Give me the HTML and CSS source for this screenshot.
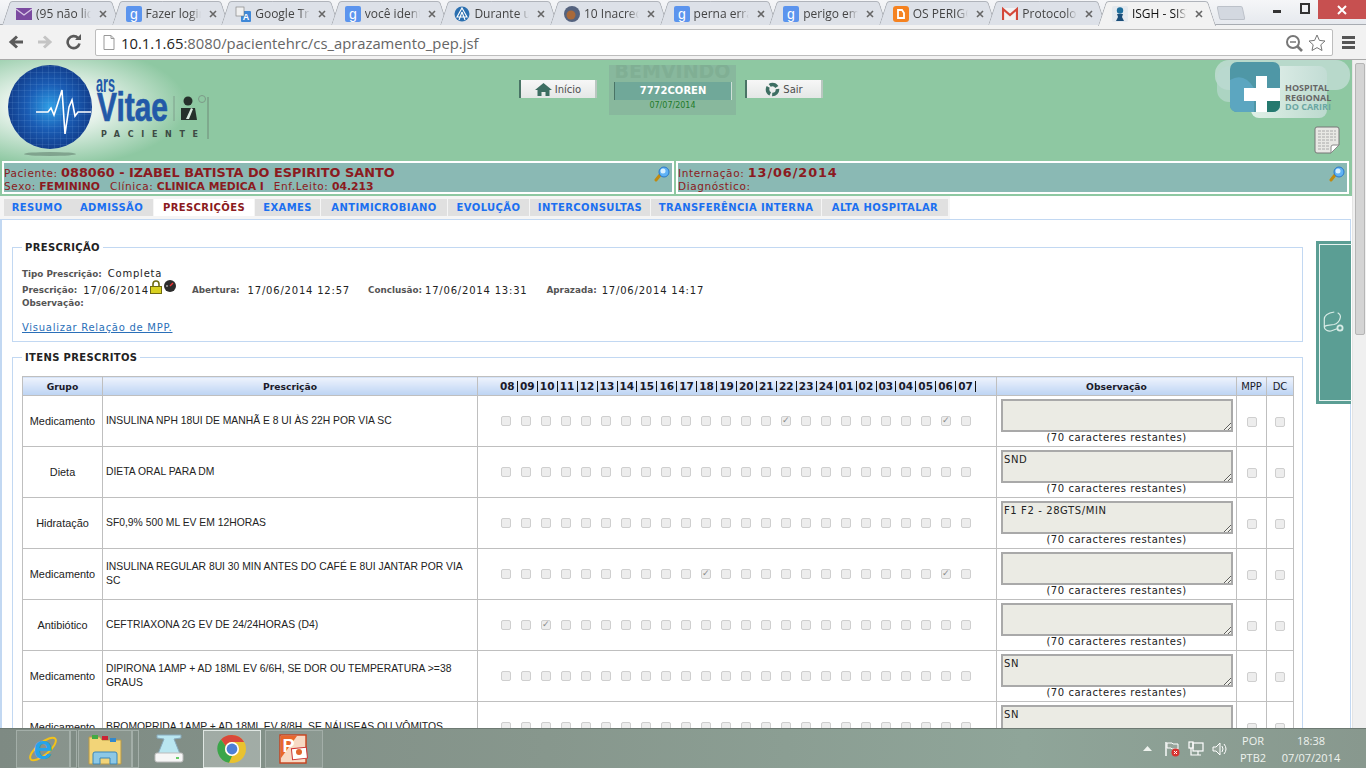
FILE: index.html
```html
<!DOCTYPE html>
<html lang="pt-BR">
<head>
<meta charset="utf-8">
<title>ISGH - SISTEMA</title>
<link rel="stylesheet" href="styles.css">
</head>
<body>
<svg class="defs" width="0" height="0">
  <symbol id="g" viewBox="0 0 16 16"><rect width="16" height="16" rx="2" fill="#5b94ee"/><text x="8" y="13" text-anchor="middle" font-family="Liberation Sans" font-size="14" fill="#fff">g</text></symbol>
  <symbol id="mag" viewBox="0 0 16 16"><path d="M2 14l4-5" stroke="#c08a10" stroke-width="3" stroke-linecap="round"/><circle cx="10" cy="6" r="5" fill="#5fb2f5" stroke="#2a78c8"/><circle cx="9" cy="5" r="2.5" fill="#d9f0ff"/></symbol>
  <symbol id="x" viewBox="0 0 8 8"><path d="M1 1l6 6M7 1L1 7" stroke="#666" stroke-width="1.6"/></symbol>
</svg>

<div class="tabstrip">
  <div class="tab"><svg class="fav" viewBox="0 0 16 16"><rect y="2" width="16" height="12" fill="#7b4aa0"/><path d="M0 3l8 6 8-6" fill="none" stroke="#d9c8e6" stroke-width="1.3"/></svg><span class="tab-t">(95 não lidas)</span><svg class="tab-x"><use href="#x"/></svg></div>
  <div class="tab"><svg class="fav"><use href="#g"/></svg><span class="tab-t">Fazer login</span><svg class="tab-x"><use href="#x"/></svg></div>
  <div class="tab"><svg class="fav" viewBox="0 0 16 16"><rect x="6" y="5" width="10" height="11" rx="1" fill="#3f88d8"/><text x="11" y="14" text-anchor="middle" font-family="Liberation Sans" font-weight="700" font-size="9" fill="#fff">A</text><rect x="1" y="1" width="8" height="9" fill="#f0f0f0" stroke="#777" stroke-width=".6"/></svg><span class="tab-t">Google Tradutor</span><svg class="tab-x"><use href="#x"/></svg></div>
  <div class="tab"><svg class="fav"><use href="#g"/></svg><span class="tab-t">você identifica</span><svg class="tab-x"><use href="#x"/></svg></div>
  <div class="tab"><svg class="fav" viewBox="0 0 16 16"><circle cx="8" cy="8" r="7.5" fill="#2a6fb0"/><path d="M8 2l5 9H3zM8 6l-3 8M8 6l3 8" fill="none" stroke="#fff" stroke-width="1.1"/></svg><span class="tab-t">Durante um</span><svg class="tab-x"><use href="#x"/></svg></div>
  <div class="tab"><svg class="fav" viewBox="0 0 16 16"><circle cx="8" cy="8" r="8" fill="#54627e"/><circle cx="7" cy="9" r="4.5" fill="#a8693a"/></svg><span class="tab-t">10 Inacreditáveis</span><svg class="tab-x"><use href="#x"/></svg></div>
  <div class="tab"><svg class="fav"><use href="#g"/></svg><span class="tab-t">perna errada</span><svg class="tab-x"><use href="#x"/></svg></div>
  <div class="tab"><svg class="fav"><use href="#g"/></svg><span class="tab-t">perigo em</span><svg class="tab-x"><use href="#x"/></svg></div>
  <div class="tab"><svg class="fav" viewBox="0 0 16 16"><rect width="16" height="16" rx="3" fill="#f58220"/><path d="M5 4h4l2 3v5H5z" fill="none" stroke="#fff" stroke-width="1.8"/></svg><span class="tab-t">OS PERIGOS</span><svg class="tab-x"><use href="#x"/></svg></div>
  <div class="tab"><svg class="fav" viewBox="0 0 16 16"><rect y="2" width="16" height="12" fill="#f2f2f2"/><path d="M1 14V3l7 6 7-6v11" fill="none" stroke="#d4493a" stroke-width="2.2"/></svg><span class="tab-t">Protocolo</span><svg class="tab-x"><use href="#x"/></svg></div>
  <div class="tab tab-on"><svg class="fav" viewBox="0 0 16 16"><rect width="16" height="16" rx="2" fill="#e4e9ee"/><circle cx="8" cy="4.5" r="3.2" fill="#1e6e9c"/><path d="M5 8h6l-1 3 2 4H4l2-4z" fill="#1a4d78"/></svg><span class="tab-t">ISGH - SISTEMA</span><svg class="tab-x"><use href="#x"/></svg></div>
  <div class="newtab"></div>
  <div class="winctl">
    <span class="w-min"></span>
    <span class="w-max"></span>
    <span class="w-close"><svg width="10" height="10" viewBox="0 0 10 10"><path d="M1 1l8 8M9 1L1 9" stroke="#fff" stroke-width="2"/></svg></span>
  </div>
</div>

<div class="toolbar">
  <svg class="tb-ic" viewBox="0 0 16 16"><path d="M15 8H4M9 2.5L3 8l6 5.5" fill="none" stroke="#5a5a5a" stroke-width="3"/></svg>
  <svg class="tb-ic" viewBox="0 0 16 16"><path d="M1 8h11M7 2.5L13 8l-6 5.5" fill="none" stroke="#c4c4c4" stroke-width="3"/></svg>
  <svg class="tb-ic" viewBox="0 0 16 16"><path d="M13.5 9.5A6 6 0 1 1 12 4" fill="none" stroke="#5a5a5a" stroke-width="2.6"/><path d="M9 6h6V0z" fill="#5a5a5a"/></svg>
  <div class="omnibox">
    <svg class="page-ic" viewBox="0 0 12 15"><path d="M1 .5h7l3 3v11H1z" fill="#fff" stroke="#999"/><path d="M8 .5v3h3" fill="none" stroke="#999"/></svg>
    <span class="url"><b>10.1.1.65</b>:8080/pacientehrc/cs_aprazamento_pep.jsf</span>
    <svg class="omni-ic" viewBox="0 0 18 18"><circle cx="8" cy="8" r="6" fill="none" stroke="#777" stroke-width="2"/><path d="M12 12l5 5" stroke="#777" stroke-width="2.6"/><path d="M5 8h6" stroke="#777" stroke-width="1.5"/></svg>
    <svg class="omni-ic" viewBox="0 0 18 18"><path d="M9 1l2.4 5.4 5.6.6-4.2 3.8 1.2 5.7L9 13.6l-5 2.9 1.2-5.7L1 7l5.6-.6z" fill="#fff" stroke="#777"/></svg>
  </div>
  <div class="menu-ic"><i></i><i></i><i></i></div>
</div>

<div class="viewport">
  <div class="page">
    <header class="head">
      <div class="head-top">
        <svg class="logo" width="220" height="101" viewBox="0 0 220 101">
          <defs>
            <radialGradient id="lg1" cx="50%" cy="50%" r="50%"><stop offset="0" stop-color="#2f9fe6"/><stop offset=".55" stop-color="#1a5cb4"/><stop offset="1" stop-color="#123f8e"/></radialGradient>
            <radialGradient id="lg2" cx="25%" cy="45%" r="60%"><stop offset="0" stop-color="#fff"/><stop offset=".35" stop-color="#e8f3ec"/><stop offset="1" stop-color="#8ec8a2"/></radialGradient>
            <pattern id="lg3" width="6" height="6" patternUnits="userSpaceOnUse"><path d="M6 0H0v6" fill="none" stroke="#8fc0ee" stroke-width=".5" opacity=".5"/></pattern>
          </defs>
          <rect width="220" height="101" fill="url(#lg2)"/>
          <ellipse cx="50" cy="94" rx="26" ry="2" fill="#6f8f7c" opacity=".7"/>
          <circle cx="50" cy="47" r="42" fill="url(#lg1)"/>
          <circle cx="50" cy="47" r="42" fill="url(#lg3)"/>
          <path d="M36 52H48L51 48 54 55 57 46 62 30 65 74 69 47 72 40 75 56 78 52H91" fill="none" stroke="#fff" stroke-width="1.6"/>
          <text x="96" y="32" font-family="Liberation Sans Narrow, Liberation Sans" font-weight="700" font-size="23" fill="#2359a8" textLength="19" lengthAdjust="spacingAndGlyphs">ars</text>
          <text x="97" y="61" font-family="Liberation Sans Narrow, Liberation Sans" font-weight="700" font-size="41" fill="#2359a8" stroke="#2359a8" stroke-width=".7" textLength="71" lengthAdjust="spacingAndGlyphs">Vitae</text>
          <text x="101" y="77" font-family="DejaVu Sans" font-weight="700" font-size="8" fill="#3d4a44" textLength="97">PACIENTE</text>
          <path d="M174 36v25" stroke="#7fa08c"/>
          <circle cx="188" cy="41" r="4.5" fill="#26302b"/>
          <path d="M181 48h14l2 12h-16z" fill="#26302b"/>
          <path d="M186 59l5-11 2 1-4 10z" fill="#dcebe1"/>
          <circle cx="202" cy="39" r="3.5" fill="none" stroke="#7d9a88"/>
          <path d="M208 37v42" stroke="#6f8a78"/>
        </svg>
        <nav class="topnav">
          <a class="navbtn"><svg width="17" height="13" viewBox="0 0 17 13"><path d="M8.5 0L0 7h2.5v6h4V9h4v4h4V7H17z" fill="#3d6e62"/></svg>Início</a>
          <div class="welcome">
            <div class="w-ghost">BEMVINDO</div>
            <div class="w-user">7772COREN</div>
            <div class="w-date">07/07/2014</div>
          </div>
          <a class="navbtn"><svg width="15" height="15" viewBox="0 0 15 15"><circle cx="7.5" cy="7.5" r="5" fill="none" stroke="#3d6e62" stroke-width="3.6" stroke-dasharray="8 2"/></svg>Sair</a>
        </nav>
        <div class="head-right">
          <svg class="hosp" width="135" height="58" viewBox="0 0 135 58">
            <defs><linearGradient id="hg" x1="0" x2="1"><stop offset="0" stop-color="#eef7f3"/><stop offset="1" stop-color="#c4ddd6"/></linearGradient></defs>
            <rect x="0" y="0" width="135" height="30" rx="14" fill="#c3ddd6" opacity=".8"/>
            <rect x="36" y="6" width="76" height="52" rx="8" fill="url(#hg)" opacity=".85"/>
            <rect x="2" y="6" width="40" height="36" rx="12" fill="#b9d8d0" opacity=".7"/>
            <rect x="15" y="2" width="50" height="50" rx="7" fill="#4f97a6"/>
            <path d="M15 20q14-8 24 8v24H22a7 7 0 0 1-7-7z" fill="#5ca6c0"/>
            <path d="M65 36q-12-12-24 16h17a7 7 0 0 0 7-7z" fill="#25796f"/>
            <path d="M41 16h11v12h13v13H52v11H41V41H29V28h12z" fill="#fff"/>
            <text x="70" y="31" class="hosp-t">HOSPITAL</text>
            <text x="70" y="41" class="hosp-t">REGIONAL</text>
            <text x="70" y="50" class="hosp-t hosp-g">DO CARIRI</text>
          </svg>
          <svg class="doc" width="26" height="28" viewBox="0 0 26 28"><path d="M3 1h20a2 2 0 0 1 2 2v16l-8 8H3a2 2 0 0 1-2-2V3a2 2 0 0 1 2-2z" fill="#e8e8e4" stroke="#777"/><path d="M17 27v-6a2 2 0 0 1 2-2h6z" fill="#fff" stroke="#888"/><path d="M4 5h18M4 8h18M4 11h18M4 14h18M4 17h12M4 20h11M4 23h11" stroke="#999" stroke-dasharray="3 1" stroke-width=".8"/></svg>
        </div>
      </div>
      <div class="patient">
        <div class="pbox">
          <div class="p-l1"><span class="p-lab">Paciente:</span> <b class="p-big">088060 - IZABEL BATISTA DO ESPIRITO SANTO</b></div>
          <div class="p-l2"><span class="p-lab">Sexo:</span> <b>FEMININO</b><span class="p-lab p-sp">Clínica:</span> <b>CLINICA MEDICA I</b><span class="p-lab p-sp">Enf.Leito:</span> <b>04.213</b></div>
          <svg class="p-mag"><use href="#mag"/></svg>
        </div>
        <div class="pbox pbox2">
          <div class="p-l1"><span class="p-lab">Internação:</span> <b class="p-big p-date">13/06/2014</b></div>
          <div class="p-l2"><span class="p-lab">Diagnóstico:</span></div>
          <svg class="p-mag"><use href="#mag"/></svg>
        </div>
      </div>
    </header>

    <div class="tabs">
      <a class="t t1">RESUMO</a><a class="t t2">ADMISSÃO</a><a class="t t3 on">PRESCRIÇÕES</a><a class="t t4">EXAMES</a><a class="t t5">ANTIMICROBIANO</a><a class="t t6">EVOLUÇÃO</a><a class="t t7">INTERCONSULTAS</a><a class="t t8">TRANSFERÊNCIA INTERNA</a><a class="t t9">ALTA HOSPITALAR</a>
    </div>

    <main class="content">
      <fieldset class="fs fs1">
        <legend>PRESCRIÇÃO</legend>
        <div class="l-tipo"><span class="k">Tipo Prescrição:</span><span class="v v-tipo">Completa</span></div>
        <div class="l-data">
          <span class="k">Prescrição:</span><span class="v v-a">17/06/2014</span>
          <svg class="lock" width="12" height="14" viewBox="0 0 12 14"><path d="M3 7V4a3 3 0 0 1 6 0v3" fill="none" stroke="#6f6a10" stroke-width="1.6"/><rect x="0.5" y="6.5" width="11" height="7" fill="#d8d020" stroke="#6f6a10"/></svg>
          <svg class="clock" width="12" height="12" viewBox="0 0 12 12"><circle cx="6" cy="6" r="6" fill="#2c2c2c"/><path d="M6 6l3-3" stroke="#e33" stroke-width="1.4"/><path d="M2 6h2" stroke="#ddd"/></svg>
          <span class="k k-ab">Abertura:</span><span class="v">17/06/2014 12:57</span>
          <span class="k k-co">Conclusão:</span><span class="v">17/06/2014 13:31</span>
          <span class="k k-ap">Aprazada:</span><span class="v">17/06/2014 14:17</span>
        </div>
        <div class="l-obs"><span class="k">Observação:</span></div>
        <a class="mpp-link" href="#">Visualizar Relação de MPP.</a>
      </fieldset>

      <fieldset class="fs fs2">
        <legend>ITENS PRESCRITOS</legend>
        <table class="grid">
          <colgroup><col class="c1"><col class="c2"><col class="c3"><col class="c4"><col class="c5"><col class="c6"></colgroup>
          <thead>
            <tr>
              <th>Grupo</th><th>Prescrição</th>
              <th class="th-h"><div class="hrs"><span>08</span><span>09</span><span>10</span><span>11</span><span>12</span><span>13</span><span>14</span><span>15</span><span>16</span><span>17</span><span>18</span><span>19</span><span>20</span><span>21</span><span>22</span><span>23</span><span>24</span><span>01</span><span>02</span><span>03</span><span>04</span><span>05</span><span>06</span><span>07</span></div></th>
              <th>Observação</th><th class="th-n">MPP</th><th class="th-n">DC</th>
            </tr>
          </thead>
          <tbody>
            <tr>
              <td class="g">Medicamento</td><td class="p">INSULINA NPH 18UI DE MANHÃ E 8 UI ÀS 22H POR VIA SC</td>
              <td><div class="cks"><input type="checkbox" disabled><input type="checkbox" disabled><input type="checkbox" disabled><input type="checkbox" disabled><input type="checkbox" disabled><input type="checkbox" disabled><input type="checkbox" disabled><input type="checkbox" disabled><input type="checkbox" disabled><input type="checkbox" disabled><input type="checkbox" disabled><input type="checkbox" disabled><input type="checkbox" disabled><input type="checkbox" disabled><input type="checkbox" disabled checked><input type="checkbox" disabled><input type="checkbox" disabled><input type="checkbox" disabled><input type="checkbox" disabled><input type="checkbox" disabled><input type="checkbox" disabled><input type="checkbox" disabled><input type="checkbox" disabled checked><input type="checkbox" disabled></div></td>
              <td class="o"><textarea disabled></textarea><div class="rest">(70 caracteres restantes)</div></td>
              <td class="n"><input type="checkbox" disabled></td><td class="n"><input type="checkbox" disabled></td>
            </tr>
            <tr>
              <td class="g">Dieta</td><td class="p">DIETA ORAL PARA DM</td>
              <td><div class="cks"><input type="checkbox" disabled><input type="checkbox" disabled><input type="checkbox" disabled><input type="checkbox" disabled><input type="checkbox" disabled><input type="checkbox" disabled><input type="checkbox" disabled><input type="checkbox" disabled><input type="checkbox" disabled><input type="checkbox" disabled><input type="checkbox" disabled><input type="checkbox" disabled><input type="checkbox" disabled><input type="checkbox" disabled><input type="checkbox" disabled><input type="checkbox" disabled><input type="checkbox" disabled><input type="checkbox" disabled><input type="checkbox" disabled><input type="checkbox" disabled><input type="checkbox" disabled><input type="checkbox" disabled><input type="checkbox" disabled><input type="checkbox" disabled></div></td>
              <td class="o"><textarea disabled>SND</textarea><div class="rest">(70 caracteres restantes)</div></td>
              <td class="n"><input type="checkbox" disabled></td><td class="n"><input type="checkbox" disabled></td>
            </tr>
            <tr>
              <td class="g">Hidratação</td><td class="p">SF0,9% 500 ML EV EM 12HORAS</td>
              <td><div class="cks"><input type="checkbox" disabled><input type="checkbox" disabled><input type="checkbox" disabled><input type="checkbox" disabled><input type="checkbox" disabled><input type="checkbox" disabled><input type="checkbox" disabled><input type="checkbox" disabled><input type="checkbox" disabled><input type="checkbox" disabled><input type="checkbox" disabled><input type="checkbox" disabled><input type="checkbox" disabled><input type="checkbox" disabled><input type="checkbox" disabled><input type="checkbox" disabled><input type="checkbox" disabled><input type="checkbox" disabled><input type="checkbox" disabled><input type="checkbox" disabled><input type="checkbox" disabled><input type="checkbox" disabled><input type="checkbox" disabled><input type="checkbox" disabled></div></td>
              <td class="o"><textarea disabled>F1 F2 - 28GTS/MIN</textarea><div class="rest">(70 caracteres restantes)</div></td>
              <td class="n"><input type="checkbox" disabled></td><td class="n"><input type="checkbox" disabled></td>
            </tr>
            <tr>
              <td class="g">Medicamento</td><td class="p">INSULINA REGULAR 8UI 30 MIN ANTES DO CAFÉ E 8UI JANTAR POR VIA SC</td>
              <td><div class="cks"><input type="checkbox" disabled><input type="checkbox" disabled><input type="checkbox" disabled><input type="checkbox" disabled><input type="checkbox" disabled><input type="checkbox" disabled><input type="checkbox" disabled><input type="checkbox" disabled><input type="checkbox" disabled><input type="checkbox" disabled><input type="checkbox" disabled checked><input type="checkbox" disabled><input type="checkbox" disabled><input type="checkbox" disabled><input type="checkbox" disabled><input type="checkbox" disabled><input type="checkbox" disabled><input type="checkbox" disabled><input type="checkbox" disabled><input type="checkbox" disabled><input type="checkbox" disabled><input type="checkbox" disabled><input type="checkbox" disabled checked><input type="checkbox" disabled></div></td>
              <td class="o"><textarea disabled></textarea><div class="rest">(70 caracteres restantes)</div></td>
              <td class="n"><input type="checkbox" disabled></td><td class="n"><input type="checkbox" disabled></td>
            </tr>
            <tr>
              <td class="g">Antibiótico</td><td class="p">CEFTRIAXONA 2G EV DE 24/24HORAS (D4)</td>
              <td><div class="cks"><input type="checkbox" disabled><input type="checkbox" disabled><input type="checkbox" disabled checked><input type="checkbox" disabled><input type="checkbox" disabled><input type="checkbox" disabled><input type="checkbox" disabled><input type="checkbox" disabled><input type="checkbox" disabled><input type="checkbox" disabled><input type="checkbox" disabled><input type="checkbox" disabled><input type="checkbox" disabled><input type="checkbox" disabled><input type="checkbox" disabled><input type="checkbox" disabled><input type="checkbox" disabled><input type="checkbox" disabled><input type="checkbox" disabled><input type="checkbox" disabled><input type="checkbox" disabled><input type="checkbox" disabled><input type="checkbox" disabled><input type="checkbox" disabled></div></td>
              <td class="o"><textarea disabled></textarea><div class="rest">(70 caracteres restantes)</div></td>
              <td class="n"><input type="checkbox" disabled></td><td class="n"><input type="checkbox" disabled></td>
            </tr>
            <tr>
              <td class="g">Medicamento</td><td class="p">DIPIRONA 1AMP + AD 18ML EV 6/6H, SE DOR OU TEMPERATURA &gt;=38 GRAUS</td>
              <td><div class="cks"><input type="checkbox" disabled><input type="checkbox" disabled><input type="checkbox" disabled><input type="checkbox" disabled><input type="checkbox" disabled><input type="checkbox" disabled><input type="checkbox" disabled><input type="checkbox" disabled><input type="checkbox" disabled><input type="checkbox" disabled><input type="checkbox" disabled><input type="checkbox" disabled><input type="checkbox" disabled><input type="checkbox" disabled><input type="checkbox" disabled><input type="checkbox" disabled><input type="checkbox" disabled><input type="checkbox" disabled><input type="checkbox" disabled><input type="checkbox" disabled><input type="checkbox" disabled><input type="checkbox" disabled><input type="checkbox" disabled><input type="checkbox" disabled></div></td>
              <td class="o"><textarea disabled>SN</textarea><div class="rest">(70 caracteres restantes)</div></td>
              <td class="n"><input type="checkbox" disabled></td><td class="n"><input type="checkbox" disabled></td>
            </tr>
            <tr>
              <td class="g">Medicamento</td><td class="p">BROMOPRIDA 1AMP + AD 18ML EV 8/8H, SE NÁUSEAS OU VÔMITOS</td>
              <td><div class="cks"><input type="checkbox" disabled><input type="checkbox" disabled><input type="checkbox" disabled><input type="checkbox" disabled><input type="checkbox" disabled><input type="checkbox" disabled><input type="checkbox" disabled><input type="checkbox" disabled><input type="checkbox" disabled><input type="checkbox" disabled><input type="checkbox" disabled><input type="checkbox" disabled><input type="checkbox" disabled><input type="checkbox" disabled><input type="checkbox" disabled><input type="checkbox" disabled><input type="checkbox" disabled><input type="checkbox" disabled><input type="checkbox" disabled><input type="checkbox" disabled><input type="checkbox" disabled><input type="checkbox" disabled><input type="checkbox" disabled><input type="checkbox" disabled></div></td>
              <td class="o"><textarea disabled>SN</textarea><div class="rest">(70 caracteres restantes)</div></td>
              <td class="n"><input type="checkbox" disabled></td><td class="n"><input type="checkbox" disabled></td>
            </tr>
          </tbody>
        </table>
      </fieldset>
    </main>

    <aside class="sidepanel">
      <svg width="24" height="24" viewBox="0 0 24 24"><path d="M12.3 1C6 2 2.3 5 2.3 8.3V16C2.3 19 6 20.5 9 20L15 17.7M15.7 1.7C18 3 18.7 5 18.3 6.7 17.8 10 15 13 12 13.5L5.7 14.3C4 14.5 2.3 15 2.3 16.5" fill="none" stroke="#d8ebe6" stroke-width="1.2"/><circle cx="18" cy="17" r="2.6" fill="none" stroke="#d8ebe6" stroke-width="1.8"/></svg>
    </aside>
  </div>
  <div class="scrollbar"><div class="thumb"></div></div>
</div>

<footer class="taskbar">
  <div class="tk tk-b tk-st">
    <svg width="34" height="34" viewBox="0 0 34 34"><ellipse cx="17" cy="17" rx="16" ry="6" transform="rotate(-40 17 17)" fill="none" stroke="#f2c21a" stroke-width="2"/><text x="17" y="27" text-anchor="middle" font-family="Liberation Sans" font-weight="700" font-size="34" fill="#27a4e8">e</text></svg>
  </div>
  <div class="tk tk-b tk-st tk-sp">
    <svg width="34" height="32" viewBox="0 0 34 32"><path d="M1 4h11l2 3h19v24H1z" fill="#f2d478" stroke="#b89a48"/><rect x="4" y="2" width="6" height="4" fill="#44aa44"/><rect x="14" y="3" width="6" height="4" fill="#c23"/><rect x="22" y="5" width="6" height="4" fill="#38c"/><path d="M5 31V21a2 2 0 0 1 2-2h20a2 2 0 0 1 2 2v10h-7v-6H12v6z" fill="#8cc8e6" stroke="#3a86b8"/></svg>
  </div>
  <div class="tk tk-scan">
    <svg width="30" height="30" viewBox="0 0 30 30"><path d="M3 1h24v3l-7 1 6 15H4L10 5 3 4z" fill="#b9e6f0" stroke="#8ab"/><rect x="1" y="19" width="28" height="9" rx="2" fill="#f6f6f6" stroke="#bbb"/><rect x="22" y="23" width="3" height="2" fill="#6c6"/></svg>
  </div>
  <div class="tk tk-b tk-chrome">
    <svg width="30" height="30" viewBox="0 0 30 30"><circle cx="15" cy="15" r="14" fill="#e9c22f"/><path d="M15 1a14 14 0 0 1 12.1 7H15a7 7 0 0 0-6.4 4L4 5.5A14 14 0 0 1 15 1z" fill="#d9483b"/><path d="M4 5.5L8.6 12a7 7 0 0 0 6.4 10l-3 6.7A14 14 0 0 1 4 5.5z" fill="#3ba54a"/><circle cx="15" cy="15" r="7" fill="#fff"/><circle cx="15" cy="15" r="5.4" fill="#4d7fd6"/></svg>
  </div>
  <div class="tk tk-b tk-ppt">
    <svg width="30" height="30" viewBox="0 0 30 30"><rect x="1" y="1" width="26" height="28" fill="#f7d9c4" stroke="#c8401c" stroke-width="1.4"/><path d="M2 2h16L2 24z" fill="#e8672c"/><rect x="13" y="14" width="15" height="11" fill="#fff" stroke="#c33" transform="rotate(-6 20 20)"/><circle cx="20" cy="18" r="3" fill="#e0652c"/><text x="3.5" y="18" font-family="Liberation Sans" font-weight="700" font-size="18" fill="#fff">P</text></svg>
  </div>
  <div class="tray">
    <svg class="tr-arrow" width="9" height="5" viewBox="0 0 9 5"><path d="M4.5 0L9 5H0z" fill="#eef2ee"/></svg>
    <svg width="16" height="16" viewBox="0 0 16 16"><path d="M2 1v14" stroke="#fff" stroke-width="1.4"/><path d="M3 2h5l1 1h5v5H8L7 7H3z" fill="#96a59b" stroke="#fff"/><circle cx="11.5" cy="11.5" r="4" fill="#d8332f"/><path d="M10 10l3 3M13 10l-3 3" stroke="#fff"/></svg>
    <svg width="16" height="16" viewBox="0 0 16 16"><rect x="5" y="2" width="10" height="8" fill="none" stroke="#fff" stroke-width="1.2"/><rect x="1" y="1" width="4" height="6" fill="none" stroke="#fff" stroke-width="1.2"/><path d="M3 7v7h10M10 10v4" fill="none" stroke="#fff" stroke-width="1.2"/></svg>
    <svg width="16" height="14" viewBox="0 0 16 14"><path d="M1 5h3l4-4v12L4 9H1z" fill="#96a59b" stroke="#fff"/><path d="M10 4q2 3 0 6M12 2q4 5 0 10" fill="none" stroke="#fff"/></svg>
    <div class="tr-lang"><div>POR</div><div>PTB2</div></div>
    <div class="tr-clock"><div>18:38</div><div>07/07/2014</div></div>
  </div>
</footer>
</body>
</html>
```
FILE: styles.css
```css
* { box-sizing: border-box; }
html, body { margin: 0; height: 100%; overflow: hidden; }
body { width: 1366px; height: 768px; display: flex; flex-direction: column; background: #fff; font-family: "DejaVu Sans", sans-serif; font-size: 10px; color: #222; }
.defs { position: absolute; }

/* browser chrome */
.tabstrip { height: 25px; flex: none; display: flex; padding-left: 6px; background: linear-gradient(#f5f6f8, #e6e9ee); border-bottom: 1px solid #a8acb2; position: relative; }
.tab { width: 109.6px; height: 25px; flex: none; position: relative; display: flex; align-items: center; padding: 2px 0 0 10px; font-family: "Open Sans", sans-serif; font-size: 12px; color: #444; }
.tab::before, .tab::after { content: ""; position: absolute; top: 1px; bottom: 0; width: 58px; background: #dde1e8; border-top: 1px solid #b0b4bb; z-index: 0; }
.tab::before { left: 0; border-left: 1px solid #a8acb2; border-radius: 3px 0 0 0; transform: skewX(-18deg); }
.tab::after { right: 0; border-right: 1px solid #a8acb2; border-radius: 0 3px 0 0; transform: skewX(18deg); }
.tab > * { position: relative; z-index: 1; }
.tab-on { z-index: 2; color: #111; }
.tab-on::before, .tab-on::after { background: #f2f2f2; bottom: -1px; }
.fav { width: 16px; height: 16px; flex: none; }
.tab-t { width: 55px; margin-left: 4px; white-space: nowrap; overflow: hidden; -webkit-mask-image: linear-gradient(90deg, #000 80%, transparent); mask-image: linear-gradient(90deg, #000 80%, transparent); }
.tab-x { width: 8px; height: 8px; margin-left: 8px; flex: none; }
.newtab { width: 26px; height: 14px; margin: 6px 0 0 6px; background: #d3d8e0; border: 1px solid #bcc1c9; border-radius: 2px; transform: skewX(12deg); }
.winctl { margin-left: auto; display: flex; align-items: flex-start; height: 19px; }
.w-min { width: 8px; height: 3px; background: #333; margin: 10px 19px 0 0; }
.w-max { width: 10px; height: 11px; border: 2px solid #333; margin: 3px 8px 0 0; }
.w-close { width: 48px; height: 19px; background: #c75050; display: flex; align-items: center; justify-content: center; }

.toolbar { height: 35px; flex: none; display: flex; align-items: center; padding: 0 8px; gap: 13px; background: #f2f2f2; border-bottom: 1px solid #a9a9a9; }
.tb-ic { width: 16px; height: 16px; flex: none; }
.omnibox { width: 1238px; height: 27px; margin: 1px 0 0 0; flex: none; display: flex; align-items: center; padding: 0 6px 0 7px; background: #fff; border: 1px solid #bdbdbd; border-radius: 2px; font-family: "Open Sans", sans-serif; font-size: 14.8px; color: #666; }
.page-ic { width: 12px; height: 15px; flex: none; margin-right: 6px; }
.url { flex: 1; white-space: nowrap; }
.url b { font-weight: 400; color: #222; }
.omni-ic { width: 18px; height: 18px; margin-left: 5px; flex: none; }
.menu-ic { display: flex; flex-direction: column; gap: 2px; margin-left: -4px; }
.menu-ic i { display: block; width: 13px; height: 3px; background: #555; }

.viewport { flex: 1; min-height: 0; display: flex; position: relative; overflow: hidden; }
.page { width: 1352px; flex: none; position: relative; overflow: hidden; }
.scrollbar { width: 14px; flex: none; background: #f0f0f0; padding: 3px 2px 0; border-left: 1px solid #e4e4e4; }
.thumb { width: 10px; height: 272px; background: #d4d4d4; border: 1px solid #b5b5b5; border-radius: 2px; }

/* header */
.head { height: 136px; background: #8ec8a2; }
.head-top { height: 101px; display: flex; }
.logo { flex: none; display: block; }
.topnav { display: flex; align-items: flex-start; margin-left: 299px; }
.navbtn { width: 78px; height: 18px; margin-top: 20px; display: flex; align-items: center; justify-content: center; gap: 3px; font-size: 10px; color: #4c4c4c; background: linear-gradient(#f7f7f7, #e4e7e6); border-left: 2px solid #4a7466; border-right: 2px solid #b9c7c0; }
.welcome { width: 127px; height: 50px; margin: 5px 9px 0 12px; background: #88b89d; text-align: center; overflow: hidden; position: relative; }
.w-ghost { height: 12px; line-height: 12px; font-size: 19px; font-weight: 700; color: #80af94; }
.w-user { width: 118px; height: 18px; margin: 5px 0 0 5px; line-height: 18px; background: #70a899; color: #fff; font-weight: 700; font-size: 10px; border-left: 1px solid #4a7466; border-right: 1px solid #cfe0d8; }
.w-date { margin-top: -1px; font-size: 8px; line-height: 13px; color: #1f7a2a; }
.head-right { margin-left: auto; margin-right: 2px; width: 135px; display: flex; flex-direction: column; }
.hosp { display: block; }
.hosp-t { font-family: "Open Sans", sans-serif; font-size: 9px; font-weight: 700; fill: #666; }
.hosp-g { fill: #6ba7a3; }
.doc { display: block; margin: 8px 0 0 99px; }

.patient { display: flex; gap: 2px; padding-left: 2px; height: 33px; }
.pbox { width: 672px; height: 33px; position: relative; background: #8ab9b4; border: 2px solid #fff; padding: 2px 0 0 0; color: #8b1a20; font-size: 10.8px; white-space: nowrap; }
.pbox2 { width: 673px; }
.p-l1 { height: 15px; line-height: 15px; }
.p-l2 { height: 13px; line-height: 13px; }
.p-lab { font-size: 10.5px; letter-spacing: .6px; color: #8b1a20; font-weight: 400; }
.p-big { font-size: 12.85px; }
.p-date { letter-spacing: .9px; }
.p-sp { margin-left: 10px; }
.p-mag { position: absolute; right: 2px; top: 3px; width: 16px; height: 16px; }

/* tabs */
.tabs { display: flex; width: fit-content; height: 23px; padding: 3px 2px 3px 4px; background: #f5f5f5; }
.t { height: 17px; line-height: 17px; text-align: center; background: #e0e0e0; color: #1b6ff0; font-weight: 700; font-size: 10px; letter-spacing: .4px; margin-right: 1px; }
.t.on { background: #fff; color: #8b1a20; }
.t1 { width: 66px; margin-right: 0; } .t2 { width: 83px; } .t3 { width: 100px; } .t4 { width: 65px; } .t5 { width: 126px; } .t6 { width: 81px; } .t7 { width: 120px; } .t8 { width: 170px; } .t9 { width: 126px; margin-right: 0; }

/* content */
.content { height: 520px; border: 1px solid #c2d8f2; border-left-width: 2px; border-bottom: 0; width: 1351px; padding: 21px 47px 0 10px; }
.fs { margin: 0; padding: 0; border: 1px solid #c2d8f2; min-width: 0; }
.fs legend { margin-left: 0; padding: 0 3px; font-weight: 700; font-size: 10px; line-height: 13px; color: #222; letter-spacing: .35px; }
.fs1 { height: 101px; padding: 12px 0 0 9px; }
.fs2 { margin-top: 9px; height: 500px; padding: 12px 9px 0 9px; }
.k { color: #555; font-weight: 700; font-size: 8.8px; }
.v { margin-left: 6px; color: #222; letter-spacing: .8px; }
.l-tipo { height: 15px; line-height: 15px; }
.l-data { height: 17px; margin: 1px 0 -2px; line-height: 17px; display: flex; align-items: center; }
.lock { margin: -8px 0 0 1px; } .clock { margin: -10px 0 0 2px; }
.k-ab { margin-left: 16px; } .k-co { margin-left: 18px; } .k-ap { margin-left: 19px; }
.k-ab + .v { margin-left: 8px; } .k-co + .v { margin-left: 3px; } .k-ap + .v { margin-left: 5px; }
.l-obs { height: 12px; line-height: 12px; }
.mpp-link { display: block; margin-top: 12px; line-height: 13px; color: #2a6fb8; letter-spacing: .72px; }

/* table */
.grid { width: 1271px; table-layout: fixed; border-collapse: collapse; }
.c1 { width: 80px; } .c2 { width: 375px; } .c3 { width: 519px; } .c4 { width: 240px; } .c5 { width: 30px; } .c6 { width: 27px; }
.grid th, .grid td { border: 1px solid #bfbfbf; padding: 0; }
.grid th { height: 19px; background: linear-gradient(#eef3fd, #bcd3f3); font-size: 9.2px; color: #1a1a2a; font-weight: 700; }
.grid th.th-n { font-weight: 400; font-size: 10px; }
.grid .hrs { display: flex; padding-left: 20px; font-size: 10.5px; }
.hrs span { width: 19.93px; height: 11px; line-height: 11px; text-align: left; border-right: 1px solid #111; padding-left: 2px; flex: none; }
.grid td { height: 51px; font-family: "Liberation Sans", sans-serif; font-size: 10.35px; color: #222; vertical-align: middle; }
.grid td.g { text-align: center; font-size: 10.9px; }
.grid td.p { padding: 0 8px 0 3px; line-height: 14px; }
.cks { display: flex; gap: 10px; padding-left: 23px; }
input[type=checkbox] { appearance: none; -webkit-appearance: none; width: 10px; height: 10px; margin: 0; flex: none; background: #ededed; border: 1px solid #cfcfcf; border-radius: 2px; position: relative; vertical-align: middle; display: inline-block; }
input[type=checkbox]:checked::after { content: "✓"; position: absolute; left: 0; top: -2px; font: 700 9px/11px "DejaVu Sans", sans-serif; color: #888; }
.grid td.o { text-align: center; padding-top: 3px; vertical-align: top; }
textarea { display: block; width: 232px; height: 33px; margin: 0 0 0 4px; padding: 3px 2px; background: #ebebe4; border: 1px solid #a9a9a9; border-radius: 0; box-shadow: inset 0 0 0 1px #a9a9a9; font: 10px "DejaVu Sans", sans-serif; letter-spacing: .6px; color: #222; resize: both; }
.rest { font: 10px/12px "DejaVu Sans", sans-serif; letter-spacing: .55px; color: #222; }
.n { text-align: center; }

.sidepanel { position: absolute; left: 1316px; top: 181px; width: 35px; height: 163px; background: #5b9e94; display: flex; align-items: center; justify-content: center; }
.sidepanel::before { content: ""; position: absolute; left: 3px; top: 3px; right: -2px; bottom: 3px; border: 1px solid #e8f3f0; }

/* taskbar */
.taskbar { height: 40px; flex: none; display: flex; align-items: center; background: linear-gradient(90deg, #7e8a83, #87978d 40%, #8fa599 75%, #88988e); border-top: 1px solid #6e7a73; padding-left: 16px; color: #eef2ee; font-family: "Open Sans", sans-serif; font-size: 11px; }
.tk { height: 38px; display: flex; align-items: center; justify-content: center; flex: none; }
.tk-b { border: 1px solid #a3aea8; background: rgba(255,255,255,.07); }
.tk-st { width: 54px; position: relative; margin-right: 8px; }
.tk-st::after { content: ""; position: absolute; left: 53px; top: -1px; bottom: -1px; width: 5px; border: 1px solid #a3aea8; }
.tk-sp { margin-right: 3px; }
.tk-scan { width: 68px; }
.tk-chrome { width: 58px; background: rgba(255,255,255,.25); border: 1px solid #dfe6e2; }
.tk-ppt { width: 58px; margin-left: 4px; }
.tray { margin-left: auto; display: flex; align-items: center; height: 100%; gap: 8px; }
.tr-arrow { margin-right: 4px; }
.tr-lang { margin-left: -3px; width: 40px; text-align: center; line-height: 17px; }
.tr-clock { width: 68px; margin: 0 21px 0 -4px; text-align: center; line-height: 17px; }
```
